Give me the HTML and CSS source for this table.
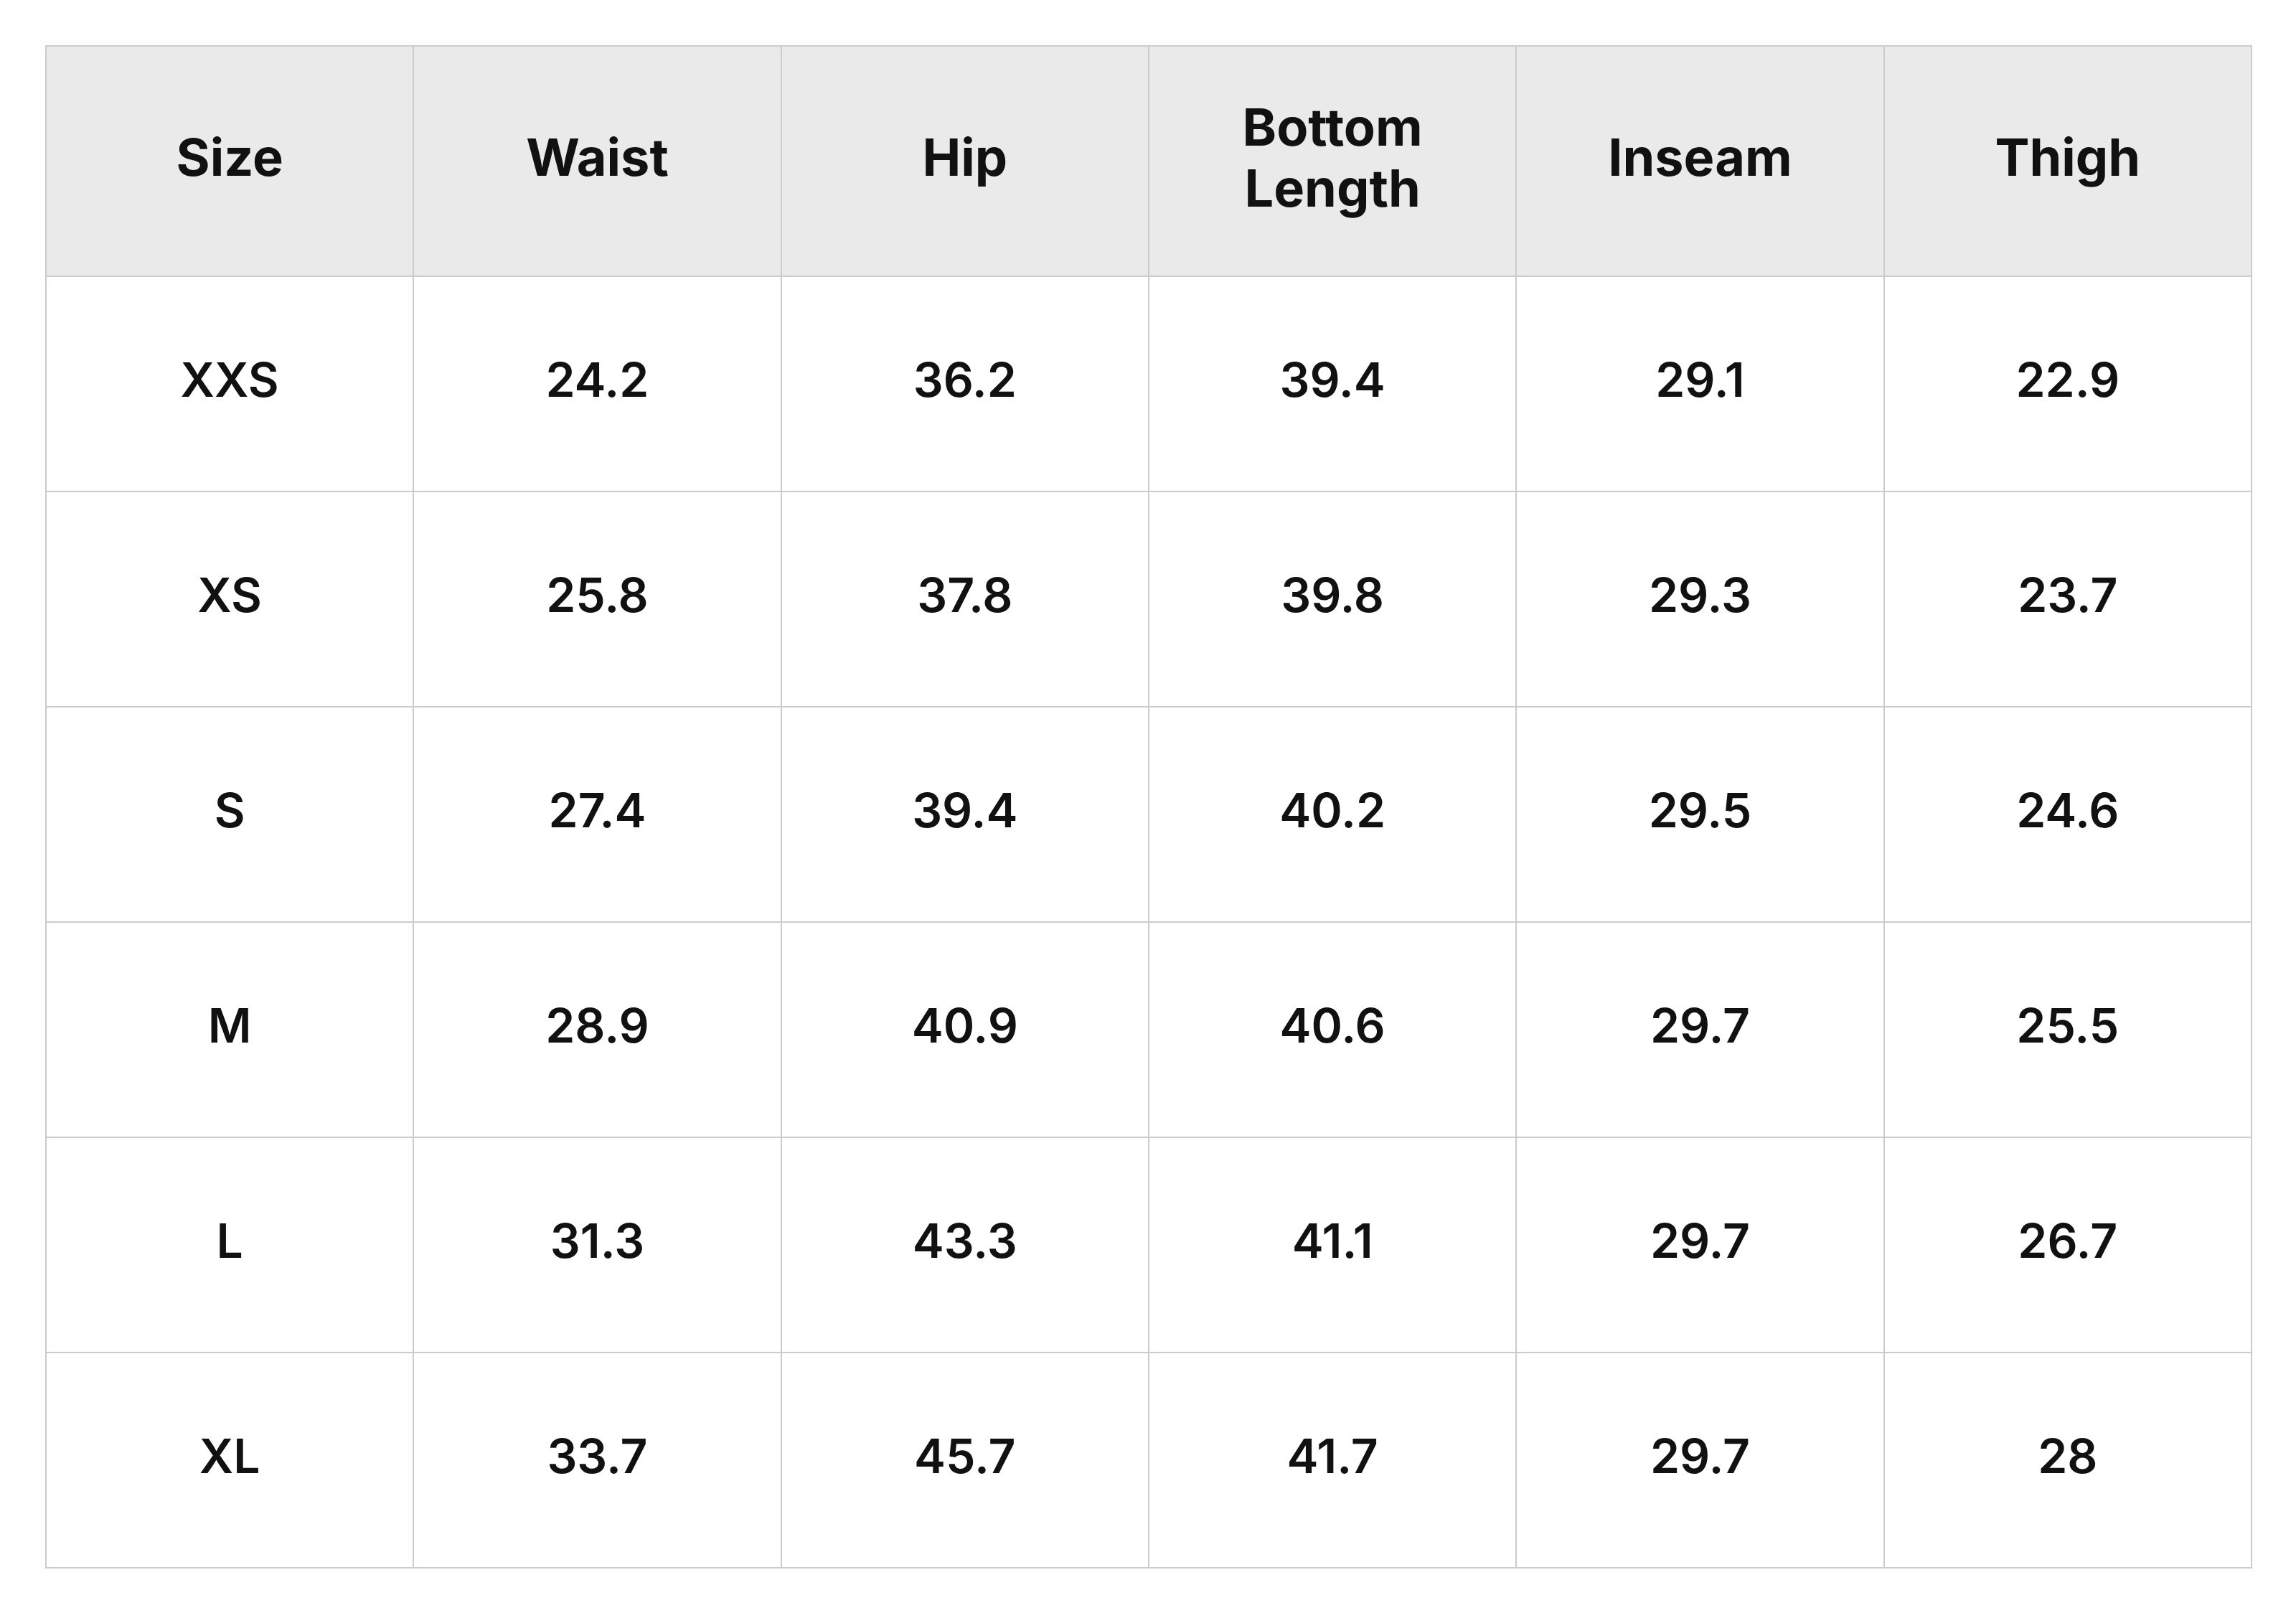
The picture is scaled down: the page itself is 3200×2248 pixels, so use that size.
FILE: index.html
```html
<!DOCTYPE html>
<html lang="en">
<head>
<meta charset="utf-8">
<title>Size Chart</title>
<link rel="stylesheet" href="styles.css">
</head>
<body>
<div class="wrap">
<table class="size-table">
  <thead>
    <tr>
      <th>Size</th>
      <th>Waist</th>
      <th>Hip</th>
      <th>Bottom<br>Length</th>
      <th>Inseam</th>
      <th>Thigh</th>
    </tr>
  </thead>
  <tbody>
    <tr><td>XXS</td><td>24.2</td><td>36.2</td><td>39.4</td><td>29.1</td><td>22.9</td></tr>
    <tr><td>XS</td><td>25.8</td><td>37.8</td><td>39.8</td><td>29.3</td><td>23.7</td></tr>
    <tr><td>S</td><td>27.4</td><td>39.4</td><td>40.2</td><td>29.5</td><td>24.6</td></tr>
    <tr><td>M</td><td>28.9</td><td>40.9</td><td>40.6</td><td>29.7</td><td>25.5</td></tr>
    <tr><td>L</td><td>31.3</td><td>43.3</td><td>41.1</td><td>29.7</td><td>26.7</td></tr>
    <tr><td>XL</td><td>33.7</td><td>45.7</td><td>41.7</td><td>29.7</td><td>28</td></tr>
  </tbody>
</table>
</div>
</body>
</html>
```

FILE: styles.css
```css
html, body {
  margin: 0;
  padding: 0;
  background: #ffffff;
}

.wrap {
  padding: 63px 0 0 63px;
}

.size-table {
  border-collapse: collapse;
  table-layout: fixed;
  width: 3076px;
  font-family: Inter, "Liberation Sans", sans-serif;
  color: #111111;
}

.size-table th,
.size-table td {
  border: 2px solid #cccccc;
  text-align: center;
  vertical-align: middle;
  padding: 0 0 12px 0;
}

.size-table th {
  background: #eaeaea;
  height: 307px;
  font-size: 72px;
  font-weight: 700;
  line-height: 85px;
}

.size-table td {
  height: 286px;
  font-size: 66px;
  font-weight: 600;
}
```
